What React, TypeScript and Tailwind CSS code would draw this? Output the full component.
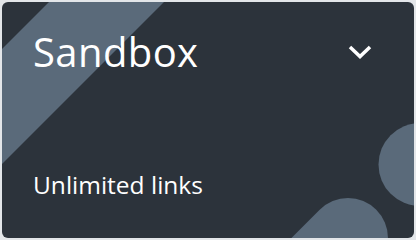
import React from "react";

export default function App() {
  return (
    <div className="w-[416px] h-[240px] bg-[#e3e6e9] p-[2px]" style={{ fontFamily: '"Open Sans", "Noto Sans", sans-serif' }}>
      <div className="relative w-full h-full rounded-[6px] bg-[#2c333b] overflow-hidden">
        <svg
          className="absolute inset-0"
          width="412"
          height="236"
          viewBox="2 2 412 236"
          aria-hidden="true"
        >
          <polygon points="51,0 166,0 0,166 0,51" fill="#5a6a7a" />
          <circle cx="420" cy="164.5" r="41.5" fill="#5a6a7a" />
          <line x1="348" y1="238" x2="148" y2="438" stroke="#5a6a7a" strokeWidth="80" strokeLinecap="round" />
        </svg>
        <div className="relative flex flex-col justify-between h-full pl-[31px] pr-[42px] pt-[30px] pb-[41px]">
          <div className="flex items-center justify-between">
            <h1 className="text-[40px] leading-[40px] tracking-[0.4px] text-white font-normal">Sandbox</h1>
            <svg width="24" height="14" viewBox="0 0 24 14" aria-hidden="true">
              <polyline points="2,2 12,11.5 22,2" fill="none" stroke="white" strokeWidth="3.5" strokeLinejoin="miter" />
            </svg>
          </div>
          <p className="text-[24.5px] leading-[24.5px] text-white">Unlimited links</p>
        </div>
      </div>
    </div>
  );
}
